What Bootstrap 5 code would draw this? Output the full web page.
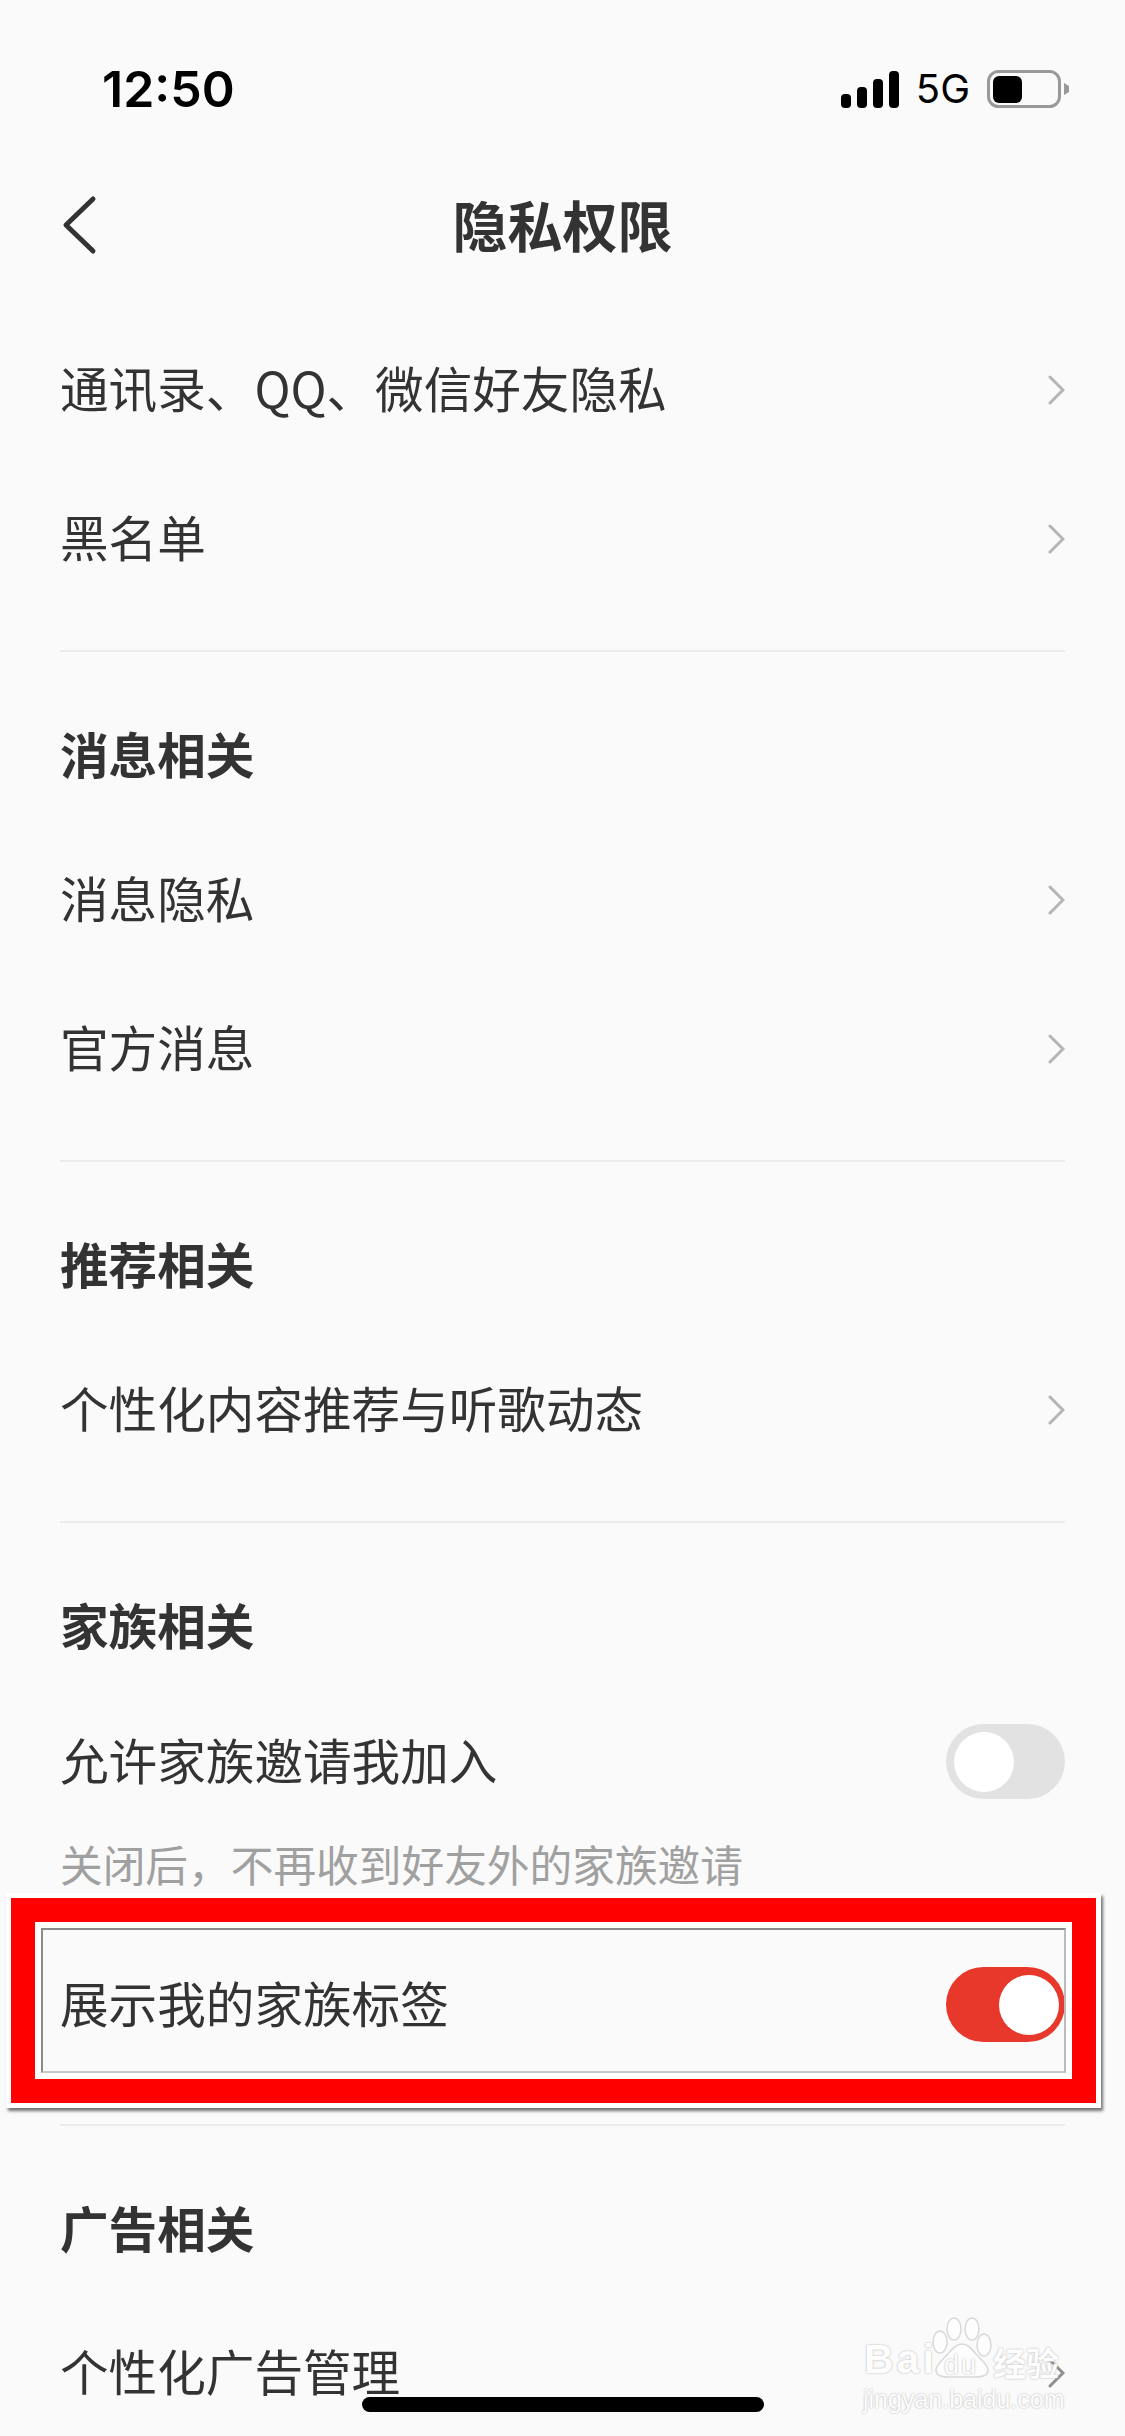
<!DOCTYPE html>
<html lang="zh">
<head>
<meta charset="utf-8">
<title>隐私权限</title>
<link href="https://cdn.jsdelivr.net/npm/bootstrap@5.3.0/dist/css/bootstrap.min.css" rel="stylesheet">
<style>
html,body{margin:0;background:#fafafa}
body{width:1125px;height:2436px;overflow:hidden;position:relative;font-family:"Noto Sans CJK SC","Liberation Sans",sans-serif;color:#333}
.status-bar{height:170px;padding:64px 56px 0 102px;color:#000}
.status-inner{height:50px}
.clock{font-family:Inter,"Liberation Sans",sans-serif;font-weight:600;font-size:50px;line-height:50px}
.status-right{gap:17px}
.net{font-family:Inter,"Liberation Sans",sans-serif;font-size:40px;line-height:40px}
.top-bar{height:110px;position:relative}
.top-title{font-size:55px;font-weight:700;line-height:106px;color:#333}
.back-ico{position:absolute;left:62px;top:25px}
.rows{padding:0 60px}
.row-item{height:149px;font-size:48.6px;line-height:60px;color:#333}
.row-text{padding-bottom:5px}
.first-gap{height:35px}
.sec-block{height:173px;padding-top:71px;font-size:48.6px;font-weight:700;line-height:60px;color:#333}
.sec-family{height:164px}
.sec-ad{height:172px;padding-top:71px}
.sep{height:2px;background:#ebebeb;margin-top:37px}
.sep-last{margin-top:45px}
.note{font-size:42.7px;line-height:54px;color:#a0a0a0;margin-bottom:40px}
.tgl{width:119px;height:75px;border-radius:38px;background:#e2e2e2;position:relative;flex:none}
.tgl::after{content:"";position:absolute;width:60px;height:60px;border-radius:50%;background:#fff;top:8px;left:8px}
.tgl.on{background:#e8382c}
.tgl.on::after{left:53px}
.hilite{position:absolute;left:6px;top:1893px;width:1095px;height:215px;border:5px solid #fff;box-shadow:2px 3px 3px rgba(0,0,0,.55);pointer-events:none}
.hilite-in{width:100%;height:100%;border:24px solid #f00}
.hilite-in2{width:100%;height:100%;border:6px solid #fff}
.hilite-in3{width:100%;height:100%;border:2px solid #8a8a8a;border-bottom-color:#c8c8c8;border-right-color:#bbb}
.home-bar{position:absolute;left:362px;top:2397px;width:402px;height:15px;border-radius:8px;background:#000}
.mark-wm{position:absolute;left:860px;top:2314px;width:206px;height:100px}
.wm-t{position:absolute;color:#fdfdfd;text-shadow:0 0 2px #a8a8a8;white-space:nowrap;font-family:"Liberation Sans",sans-serif}
.wm-a{left:4px;top:23px;font-weight:700;font-size:41px;line-height:44px;letter-spacing:3px}
.wm-d{left:84px;top:36px;font-size:27px;line-height:30px;letter-spacing:2px}
.wm-b{left:133px;top:30px;font-family:"Noto Sans CJK SC",sans-serif;font-size:33px;line-height:36px;font-weight:700}
.wm-c{left:3px;top:71px;font-size:25px;line-height:28px}
.wm-p{position:absolute;left:72px;top:3px}
</style>
</head>
<body>
<div class="status-bar">
  <div class="status-inner d-flex justify-content-between align-items-center">
    <span class="clock">12:50</span>
    <div class="status-right d-flex align-items-center">
      <svg width="58" height="37" viewBox="0 0 58 37" aria-hidden="true"><rect x="0" y="23" width="10" height="14" rx="4"/><rect x="16" y="16" width="10" height="21" rx="4"/><rect x="32" y="8" width="10" height="29" rx="4"/><rect x="48" y="0" width="10" height="37" rx="4"/></svg>
      <span class="net">5G</span>
      <svg width="82" height="38" viewBox="0 0 82 38" aria-hidden="true"><rect x="1.5" y="1.5" width="71" height="35" rx="10" fill="none" stroke="#999" stroke-width="3"/><rect x="6" y="6" width="29" height="27" rx="6"/><path d="M77 13l5 3v6l-5 3z" fill="#999"/></svg>
    </div>
  </div>
</div>
<div class="top-bar text-center">
  <svg class="back-ico" width="36" height="60" viewBox="0 0 36 60" aria-hidden="true"><path d="M31 4L4 30l27 26" fill="none" stroke="#333" stroke-width="5" stroke-linecap="round" stroke-linejoin="round"/></svg>
  <div class="top-title">隐私权限</div>
</div>
<div class="rows">
  <div class="first-gap"></div>
  <div class="row-item d-flex justify-content-between align-items-center"><span class="row-text">通讯录、QQ、微信好友隐私</span><svg width="18" height="32" viewBox="0 0 18 32" aria-hidden="true"><path d="M3 3l13 13L3 29" fill="none" stroke="#b5b5b5" stroke-width="3" stroke-linecap="round"/></svg></div>
  <div class="row-item d-flex justify-content-between align-items-center"><span class="row-text">黑名单</span><svg width="18" height="32" viewBox="0 0 18 32" aria-hidden="true"><path d="M3 3l13 13L3 29" fill="none" stroke="#b5b5b5" stroke-width="3" stroke-linecap="round"/></svg></div>
  <div class="sep"></div>
  <div class="sec-block">消息相关</div>
  <div class="row-item d-flex justify-content-between align-items-center"><span class="row-text">消息隐私</span><svg width="18" height="32" viewBox="0 0 18 32" aria-hidden="true"><path d="M3 3l13 13L3 29" fill="none" stroke="#b5b5b5" stroke-width="3" stroke-linecap="round"/></svg></div>
  <div class="row-item d-flex justify-content-between align-items-center"><span class="row-text">官方消息</span><svg width="18" height="32" viewBox="0 0 18 32" aria-hidden="true"><path d="M3 3l13 13L3 29" fill="none" stroke="#b5b5b5" stroke-width="3" stroke-linecap="round"/></svg></div>
  <div class="sep"></div>
  <div class="sec-block">推荐相关</div>
  <div class="row-item d-flex justify-content-between align-items-center"><span class="row-text">个性化内容推荐与听歌动态</span><svg width="18" height="32" viewBox="0 0 18 32" aria-hidden="true"><path d="M3 3l13 13L3 29" fill="none" stroke="#b5b5b5" stroke-width="3" stroke-linecap="round"/></svg></div>
  <div class="sep"></div>
  <div class="sec-block sec-family">家族相关</div>
  <div class="row-item d-flex justify-content-between align-items-center"><span class="row-text">允许家族邀请我加入</span><span class="tgl"></span></div>
  <div class="note">关闭后，不再收到好友外的家族邀请</div>
  <div class="row-item d-flex justify-content-between align-items-center"><span class="row-text">展示我的家族标签</span><span class="tgl on"></span></div>
  <div class="sep sep-last"></div>
  <div class="sec-block sec-ad">广告相关</div>
  <div class="row-item d-flex justify-content-between align-items-center"><span class="row-text">个性化广告管理</span><svg width="18" height="32" viewBox="0 0 18 32" aria-hidden="true"><path d="M3 3l13 13L3 29" fill="none" stroke="#8f8f8f" stroke-width="3" stroke-linecap="round"/></svg></div>
</div>
<div class="hilite"><div class="hilite-in"><div class="hilite-in2"><div class="hilite-in3"></div></div></div></div>
<div class="mark-wm">
  <svg class="wm-p" width="60" height="62" viewBox="0 0 60 62" aria-hidden="true"><g fill="#fdfdfd" stroke="#d8d8d8" stroke-width="1.5"><ellipse cx="22" cy="12" rx="7" ry="11"/><ellipse cx="40" cy="12" rx="7" ry="11"/><ellipse cx="8" cy="25" rx="7" ry="11"/><ellipse cx="52" cy="28" rx="7" ry="11"/><path d="M30 27c-7 0-11 7-17 13-6 6-9 10-9 13 0 5 5 7 12 7h28c7 0 12-2 12-7 0-3-3-7-9-13-6-6-10-13-17-13z"/></g></svg>
  <span class="wm-t wm-a">Bai</span>
  <span class="wm-t wm-d">du</span>
  <span class="wm-t wm-b">经验</span>
  <span class="wm-t wm-c">jingyan.baidu.com</span>
</div>
<div class="home-bar"></div>
</body>
</html>
